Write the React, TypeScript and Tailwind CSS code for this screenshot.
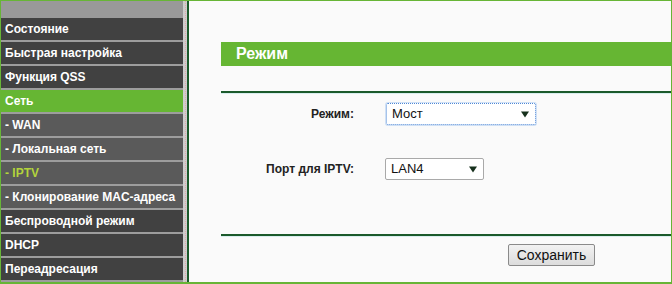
const menu: { label: string; kind: "main" | "active" | "sub" | "subActive" }[] = [
  { label: "Состояние", kind: "main" },
  { label: "Быстрая настройка", kind: "main" },
  { label: "Функция QSS", kind: "main" },
  { label: "Сеть", kind: "active" },
  { label: "- WAN", kind: "sub" },
  { label: "- Локальная сеть", kind: "sub" },
  { label: "- IPTV", kind: "subActive" },
  { label: "- Клонирование MAC-адреса", kind: "sub" },
  { label: "Беспроводной режим", kind: "main" },
  { label: "DHCP", kind: "main" },
  { label: "Переадресация", kind: "main" },
];

const rowClass = {
  main: "bg-[#414141] text-white",
  active: "bg-[#66b633] text-white",
  sub: "bg-[#5a5a5a] text-white",
  subActive: "bg-[#5a5a5a] text-[#b3d43c]",
};

function Arrow() {
  return (
    <svg width="8" height="7" viewBox="0 0 8 7" className="shrink-0">
      <path d="M0 0.5 H8 L4 6.5 Z" fill="#16301c" />
    </svg>
  );
}

export default function App() {
  return (
    <div
      className="w-[672px] h-[284px] border-t border-l border-r border-b-2 border-[#67b536] flex bg-[#fafafa] overflow-hidden"
      style={{ fontFamily: '"Liberation Sans", Arial, sans-serif' }}
    >
      {/* Sidebar */}
      <div className="w-[182px] shrink-0 bg-[#9d9d9d] flex flex-col gap-[2px]">
        <div className="h-[17px] -mb-[2px] bg-[#999999]"></div>
        {menu.map((item) => (
          <div
            key={item.label}
            className={`h-[22px] flex items-center pl-[4px] text-[12px] font-bold leading-none whitespace-nowrap ${rowClass[item.kind]}`}
          >
            {item.label}
          </div>
        ))}
      </div>

      {/* Divider */}
      <div className="w-[4px] shrink-0 bg-[#cdcdcd] flex justify-center">
        <div className="w-0 border-l border-dotted border-[#e0a8a8]"></div>
      </div>
      <div className="w-[2px] shrink-0 bg-[#1b5a2b]"></div>

      {/* Content */}
      <div className="flex-1 pl-[32px] pt-[41px]">
        <div className="h-[24px] bg-[#66b633] flex items-center pl-[15px] text-white text-[16px] font-bold -mr-[1px]">
          Режим
        </div>

        <div className="mt-[25px] h-[2px] bg-[#1b5a2b]"></div>
        <div className="h-[1px] bg-[#d8eeee]"></div>

        <div className="grid grid-cols-[133px_1fr] gap-x-[32px] items-center mt-[9px] text-[#222] text-[12px]">
          <div className="text-right font-bold">Режим:</div>
          <div className="w-[150px] h-[22px] bg-white border border-dotted border-[#4f88d6] rounded-[2px] shadow-[0_0_0_1px_#cfe0f5] flex items-center justify-between pl-[5px] pr-[6px] text-[13px] text-[#111]">
            <span>Мост</span>
            <Arrow />
          </div>

          <div className="text-right font-bold mt-[33px]">Порт для IPTV:</div>
          <div className="mt-[33px] -ml-[1px] w-[99px] h-[22px] bg-white border border-[#a9a9a9] rounded-[2px] flex items-center justify-between pl-[5px] pr-[6px] text-[13px] text-[#111]">
            <span>LAN4</span>
            <Arrow />
          </div>
        </div>

        <div className="mt-[54px] h-[2px] bg-[#1b5a2b]"></div>
        <div className="h-[1px] bg-[#d8eeee]"></div>

        <div className="flex mt-[7px] pl-[287px]">
          <button className="w-[87px] h-[22px] border border-[#8a8a8a] rounded-[2px] bg-gradient-to-b from-[#f2f2f2] to-[#dcdcdc] text-[14px] text-[#111] leading-none">
            Сохранить
          </button>
        </div>
      </div>
    </div>
  );
}
